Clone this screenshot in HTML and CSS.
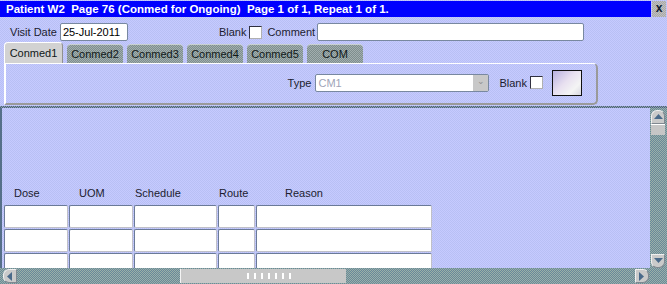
FILE: index.html
```html
<!DOCTYPE html>
<html lang="en">
<head>
<meta charset="UTF-8">
<title>Conmed for Ongoing</title>
<link rel="stylesheet" href="styles.css">
</head>
<body>
<div class="window">

<div class="titlebar">
<div class="title">Patient W2&nbsp; Page 76 (Conmed for Ongoing)&nbsp; Page 1 of 1, Repeat 1 of 1.</div>
<div class="close">x</div>
</div>

<div class="header">
<span class="lbl">Visit Date</span>
<div class="field date">25-Jul-2011</div>
<span class="lbl blank-lbl">Blank</span>
<div class="check"></div>
<span class="lbl comment-lbl">Comment</span>
<div class="field comment"></div>
</div>

<div class="tabs">
<div class="tab active">Conmed1</div>
<div class="tab">Conmed2</div>
<div class="tab">Conmed3</div>
<div class="tab">Conmed4</div>
<div class="tab">Conmed5</div>
<div class="tab">COM</div>
</div>

<div class="panel">
<span class="lbl">Type</span>
<div class="select"><span>CM1</span><div class="drop">&#8964;</div></div>
<span class="lbl panel-blank">Blank</span>
<div class="check"></div>
<div class="swatch"></div>
</div>

<div class="sep"></div>

<div class="body">
<div class="canvas">
<div class="cols">
<span class="c-dose">Dose</span>
<span class="c-uom">UOM</span>
<span class="c-sched">Schedule</span>
<span class="c-route">Route</span>
<span class="c-reason">Reason</span>
</div>
<div class="grid">
<div class="cell"></div><div class="cell"></div><div class="cell"></div><div class="cell"></div><div class="cell"></div>
<div class="cell"></div><div class="cell"></div><div class="cell"></div><div class="cell"></div><div class="cell"></div>
<div class="cell"></div><div class="cell"></div><div class="cell"></div><div class="cell"></div><div class="cell"></div>
</div>
</div>
<div class="vscroll">
<div class="sbtn up"><svg width="9" height="6" viewBox="0 0 9 6"><path d="M0 5h9L4.5 0z" fill="#4a6a8a"/></svg></div>
<div class="vthumb"></div>
<div class="vtrack"></div>
<div class="sbtn down"><svg width="9" height="6" viewBox="0 0 9 6"><path d="M0 0h9L4.5 5z" fill="#4a6a8a"/></svg></div>
</div>
</div>

<div class="hscroll">
<div class="sbtn left"><svg width="6" height="9" viewBox="0 0 6 9"><path d="M5 0v9L0 4.5z" fill="#4a6a8a"/></svg></div>
<div class="htrack first"></div>
<div class="hthumb"><span class="grip"></span></div>
<div class="htrack"></div>
<div class="sbtn right"><svg width="6" height="9" viewBox="0 0 6 9"><path d="M0 0v9L5 4.5z" fill="#4a6a8a"/></svg></div>
<div class="corner"></div>
</div>

</div>
</body>
</html>
```

FILE: styles.css
```css
*{
margin: 0;
padding: 0;
box-sizing: border-box;
}

body{
width: 667px;
height: 284px;
overflow: hidden;
font-family: "Liberation Sans", Arial, sans-serif;
font-size: 11px;
color: #1c1c30;
background: repeating-conic-gradient(#c6caff 0 25%, #b8c0f4 0 50%) 0 0/2px 2px;
}

.window{
display: flex;
flex-direction: column;
height: 284px;
}

/* title bar */
.titlebar{
display: flex;
height: 16px;
margin-top: 1px;
}

.title{
width: 651px;
background: #0000ff;
color: #fff;
font-weight: bold;
font-size: 11.5px;
line-height: 16px;
padding-left: 6px;
white-space: nowrap;
}

.close{
width: 14px;
height: 16px;
margin-left: 1px;
background: repeating-conic-gradient(#c0c0c0 0 25%, #a8a8a8 0 50%) 0 0/2px 2px;
color: #102030;
font-weight: bold;
font-size: 12px;
text-align: center;
line-height: 15px;
}

/* header row */
.header{
display: flex;
align-items: center;
height: 18px;
margin-top: 6px;
padding-left: 10px;
}

.lbl{
white-space: nowrap;
}

.field{
height: 18px;
background: #fff;
border: 1px solid #7888a0;
border-radius: 2px;
line-height: 16px;
padding-left: 2px;
color: #000;
}

.date{
width: 68px;
margin-left: 3px;
}

.blank-lbl{
margin-left: 91px;
}

.check{
width: 13px;
height: 13px;
background: #fff;
border: 1px solid;
border-color: #303040 #b0b0b0 #b0b0b0 #303040;
margin-left: 3px;
}

.comment-lbl{
margin-left: 5px;
}

.comment{
width: 267px;
margin-left: 2px;
}

/* tabs */
.tabs{
display: flex;
align-items: flex-end;
height: 21px;
margin-top: 1px;
padding-left: 4px;
}

.tab{
width: 56px;
height: 19px;
margin-left: 4px;
text-align: center;
line-height: 18px;
background: repeating-conic-gradient(#7e8e8e 0 25%, #a2aeae 0 50%) 0 0/2px 2px;
border-radius: 4px 4px 0 0;
border-top: 1px solid #c8d0d0;
color: #101818;
}

.tab.active{
width: 59px;
height: 21px;
margin-left: 0;
background: #d2d2d2;
border: 1px solid #fff;
border-bottom: none;
border-right-color: #909090;
line-height: 20px;
}

/* tab panel */
.panel{
display: flex;
align-items: center;
justify-content: flex-end;
height: 43px;
margin: 0 69px 0 4px;
padding: 0 14px 2px 0;
border: 1px solid #fff;
border-left-width: 2px;
border-right: 2px solid #9a9a9a;
border-bottom: 2px solid #9a9a9a;
border-radius: 0 5px 5px 0;
}

.panel .lbl:first-child{
margin-right: 4px;
}

.select{
display: flex;
width: 174px;
height: 18px;
background: #fff;
border: 1px solid #7888a0;
border-radius: 2px;
color: #a0a4b8;
line-height: 16px;
padding-left: 2px;
}

.select span{
flex: 1;
}

.drop{
width: 15px;
background: #c8c8c8;
color: #909090;
text-align: center;
font-size: 9px;
line-height: 12px;
}

.panel-blank{
margin-left: 10px;
}

.swatch{
width: 30px;
height: 26px;
margin: 0 0 0 9px;
border: 1px solid #101010;
background: linear-gradient(135deg, #b8b0e0 0%, #e8e0f0 45%, #f4f4f4 75%, #d8d8e0 100%);
}

.sep{
height: 2px;
margin-top: 1px;
background: repeating-conic-gradient(#4c6478 0 25%, #8a9cb0 0 50%) 0 0/2px 2px;
}

/* main area */
.body{
display: flex;
height: 160px;
}

.canvas{
flex: 1;
border-left: 2px solid #56708a;
padding: 78px 0 0 2px;
overflow: hidden;
}

.cols{
display: grid;
grid-template-columns: 65px 65px 84px 38px 177px;
height: 14px;
line-height: 14px;
}

.c-dose{ padding-left: 10px; }
.c-uom{ padding-left: 10px; }
.c-sched{ padding-left: 1px; }
.c-route{ padding-left: 1px; }
.c-reason{ padding-left: 29px; }

.grid{
display: grid;
grid-template-columns: 64px 64px 83px 37px 176px;
grid-auto-rows: 23px;
gap: 1px;
margin-top: 5px;
}

.cell{
background: #fff;
border: 1px solid;
border-color: #6a7a98 #c0c0c8 #c0c0c8 #6a7a98;
border-radius: 2px;
}

.vscroll{
display: flex;
flex-direction: column;
align-items: center;
width: 17px;
padding: 2px 1px 0 0;
background: repeating-conic-gradient(#68889a 0 25%, #9ab0a8 0 50%) 0 0/2px 2px;
}

.sbtn{
display: flex;
align-items: center;
justify-content: center;
width: 14px;
height: 14px;
background: #cacaca;
border: 1px solid #f0f0f0;
border-right-color: #808890;
border-bottom-color: #808890;
}

.up{
border-radius: 6px 6px 0 0;
}

.down{
border-radius: 0 0 6px 6px;
}

.vthumb{
width: 14px;
height: 11px;
background: #c6c6c6;
border-top: 1px solid #fff;
}

.vtrack{
flex: 1;
}

.hscroll{
display: flex;
align-items: center;
height: 16px;
padding-left: 3px;
background: repeating-conic-gradient(#68889a 0 25%, #9ab0a8 0 50%) 0 0/2px 2px;
}

.left{
border-radius: 6px 0 0 6px;
}

.right{
border-radius: 0 6px 6px 0;
}

.htrack.first{
width: 163px;
flex: none;
}

.htrack{
flex: 1;
}

.hthumb{
display: flex;
align-items: center;
justify-content: flex-end;
width: 166px;
height: 14px;
padding-right: 55px;
background: #c8c8c8;
border-left: 1px solid #f4f4f4;
}

.grip{
width: 44px;
height: 6px;
background: repeating-linear-gradient(90deg, #fff 0 2px, transparent 2px 7px);
}

.corner{
width: 18px;
}
```
